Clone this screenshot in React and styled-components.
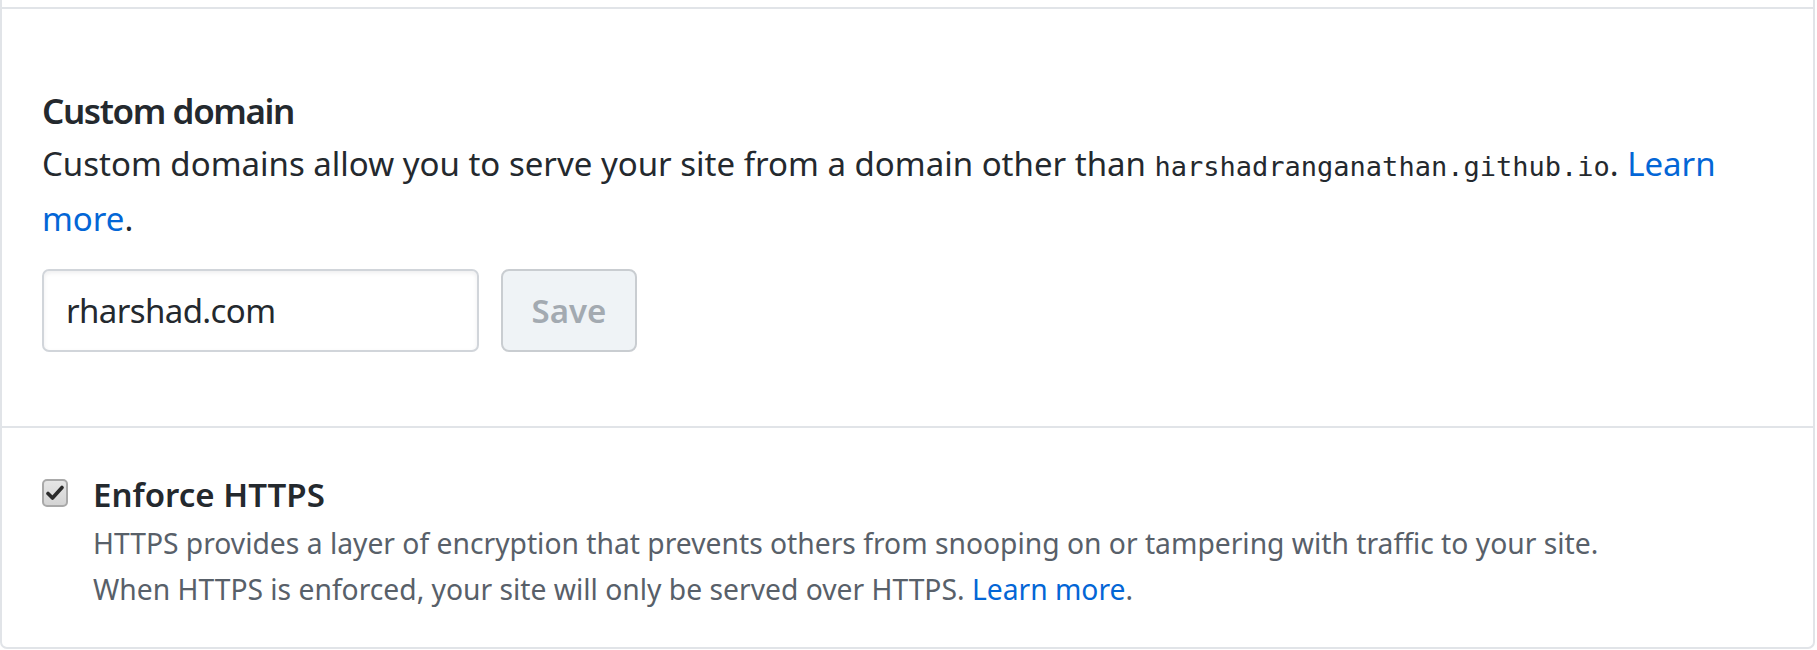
import React from 'react';
import styled, { createGlobalStyle } from 'styled-components';

const GlobalStyle = createGlobalStyle`
  html, body {
    margin: 0;
    padding: 0;
    background: #fff;
  }
  body {
    font-family: "Noto Sans", "Open Sans", sans-serif;
    color: #24292e;
    -webkit-font-smoothing: antialiased;
  }
`;

const Box = styled.div`
  width: 1815px;
  box-sizing: border-box;
  border: 2.5px solid #e1e4e8;
  border-top: none;
  border-radius: 0 0 7px 7px;
`;

const PrevRowTail = styled.div`
  height: 7px;
`;

const Row = styled.div`
  border-top: 2.5px solid #e1e4e8;
  padding: ${p => p.$pad};
`;

const Heading = styled.h3`
  margin: 0;
  font-size: 35px;
  line-height: 54px;
  font-weight: 600;
  letter-spacing: -1.4px;
`;

const Text = styled.p`
  margin: 0;
  font-size: 33px;
  line-height: 52px;
`;

const Code = styled.code`
  font-family: "DejaVu Sans Mono", "Liberation Mono", monospace;
  font-size: 27px;
`;

const Link = styled.a`
  color: #0366d6;
  text-decoration: none;
`;

const Form = styled.form`
  display: flex;
  gap: 22px;
  margin-top: 24px;
`;

const Input = styled.input`
  box-sizing: border-box;
  width: 437px;
  height: 83px;
  padding: 0 22px;
  font-family: inherit;
  font-size: 33px;
  letter-spacing: -0.6px;
  color: #24292e;
  background: #fff;
  border: 2.5px solid #d1d5da;
  border-radius: 7px;
  box-shadow: inset 0 2px 4px rgba(27, 31, 35, 0.075);
  outline: none;
`;

const Button = styled.button`
  box-sizing: border-box;
  width: 136px;
  height: 83px;
  font-family: inherit;
  font-size: 33px;
  font-weight: 600;
  color: #a3aab1;
  background: #eff3f6;
  border: 2.5px solid #c9cdd1;
  border-radius: 8px;
  cursor: default;
`;

const CheckRow = styled.div`
  display: flex;
  align-items: flex-start;
  gap: 25px;
`;

const CheckBox = styled.span`
  flex: none;
  box-sizing: border-box;
  width: 26px;
  height: 28px;
  margin-top: 9px;
  border: 2px solid #a9a9a9;
  border-radius: 5px;
  background: linear-gradient(#e6e6e6, #d4d4d4);
  display: flex;
  align-items: center;
  justify-content: center;
`;

const Label = styled.div`
  display: flex;
  flex-direction: column;
`;

const LabelTitle = styled.span`
  font-size: 33px;
  line-height: 50px;
  font-weight: 600;
`;

const Note = styled.p`
  margin: 0;
  font-size: 28.25px;
  line-height: 46px;
  color: #586069;
`;

export default function App() {
  return (
    <>
      <GlobalStyle />
      <Box>
        <PrevRowTail />
        <Row $pad="75px 40px 74px">
          <Heading>Custom domain</Heading>
          <Text>
            Custom domains allow you to serve your site from a domain other than{' '}
            <Code>harshadranganathan.github.io</Code>. <Link href="#">Learn more</Link>.
          </Text>
          <Form onSubmit={e => e.preventDefault()}>
            <Input type="text" defaultValue="rharshad.com" />
            <Button type="submit" disabled>Save</Button>
          </Form>
        </Row>
        <Row $pad="42px 40px 35px">
          <CheckRow>
            <CheckBox>
              <svg width="18" height="16" viewBox="0 0 18 16">
                <path d="M2 8.5 L6.5 13 L16 2.5" fill="none" stroke="#2b2b2b" strokeWidth="3.6" strokeLinecap="round" strokeLinejoin="round" />
              </svg>
            </CheckBox>
            <Label>
              <LabelTitle>Enforce HTTPS</LabelTitle>
              <Note>
                HTTPS provides a layer of encryption that prevents others from snooping on or tampering with traffic to your site.
                <br />
                When HTTPS is enforced, your site will only be served over HTTPS. <Link href="#">Learn more</Link>.
              </Note>
            </Label>
          </CheckRow>
        </Row>
      </Box>
    </>
  );
}
